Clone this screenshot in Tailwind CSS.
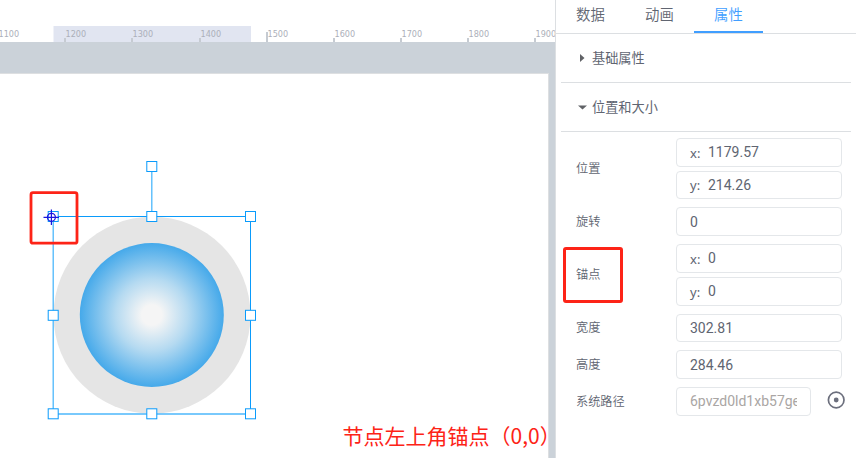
<!DOCTYPE html>
<html lang="zh">
<head>
<meta charset="utf-8">
<title>属性</title>
<script src="https://cdn.jsdelivr.net/npm/@tailwindcss/browser@4"></script>
</head>
<body class="w-[858px] h-[458px] overflow-hidden flex bg-white font-['Noto_Sans_CJK_SC',sans-serif] font-[350] text-[#606571]">
<main class="relative w-[555px] h-full shrink-0 overflow-hidden flex flex-col">
  <div class="h-[42px] shrink-0">
    <svg class="block" width="555" height="42" font-family="'DejaVu Sans Condensed','DejaVu Sans',sans-serif" font-stretch="condensed" font-weight="400" font-size="9" fill="#acb0ba">
      <rect x="53.500" y="26" width="197.500" height="16" fill="#e1e5f1"/>
      <g fill="#c6cbd2">
        <rect x="64" y="38" width="2" height="4"/><rect x="131" y="38" width="2" height="4"/><rect x="199" y="38" width="2" height="4"/><rect x="266" y="32" width="2" height="10"/><rect x="333" y="38" width="2" height="4"/><rect x="400" y="38" width="2" height="4"/><rect x="467" y="38" width="2" height="4"/><rect x="534" y="38" width="2" height="4"/>
      </g>
      <text x="-1.500" y="37">1100</text><text x="65.500" y="37">1200</text><text x="132.500" y="37">1300</text><text x="200.500" y="37">1400</text><text x="267.500" y="37">1500</text><text x="334.500" y="37">1600</text><text x="401.500" y="37">1700</text><text x="468.500" y="37">1800</text><text x="535.500" y="37">1900</text>
    </svg>
  </div>
  <div class="flex-1 bg-[#cbd2d9] pt-[31px] pr-[6px]">
    <div class="h-full bg-white border-t border-r border-[#dddfe1]"></div>
  </div>
  <svg class="absolute left-0 top-0" width="555" height="458" fill="none">
    <defs>
      <radialGradient id="ball"><stop offset="0" stop-color="#f5f5f5"/><stop offset=".14" stop-color="#f5f5f5"/><stop offset=".5" stop-color="#b5daf1"/><stop offset="1" stop-color="#45a9ea"/></radialGradient>
    </defs>
    <circle cx="152" cy="315.200" r="98.500" fill="#e5e5e5"/>
    <circle cx="151.800" cy="315" r="72" fill="url(#ball)"/>
    <g stroke="#0a9bfb">
      <path d="M53 216.500H251M250.500 216V414"/>
      <path d="M53.200 216V414M53 414H251M151.800 171V212" stroke-width="1.300" stroke="#4db8fc"/>
      <g fill="#fff">
        <rect x="48.200" y="211.500" width="10" height="10"/><rect x="146.800" y="211.500" width="10" height="10"/><rect x="245.500" y="211.500" width="10" height="10"/>
        <rect x="48.200" y="310.300" width="10" height="10"/><rect x="245.500" y="310.300" width="10" height="10"/>
        <rect x="48.200" y="408.800" width="10" height="10"/><rect x="146.800" y="408.800" width="10" height="10"/><rect x="245.500" y="408.800" width="10" height="10"/>
        <rect x="146.800" y="161.500" width="10" height="10"/>
      </g>
    </g>
    <g stroke="#1b16dc" stroke-width="1.200"><circle cx="51.400" cy="217.300" r="4"/><path d="M43.500 217.400H59M51.400 209.500V225"/></g>
    <rect x="31" y="192.700" width="46" height="50.500" rx="2" stroke="#fd2317" stroke-width="2.800"/>
  </svg>
  <p class="absolute left-[342.500px] top-[419px] text-[21px] leading-8 whitespace-nowrap font-normal text-[#fd2317]">节点左上角锚点（0,0）</p>
</main>
<aside class="w-[303px] h-full shrink-0 border-l border-[#dcdfe2] pr-[2px]">
  <nav class="h-[34px] flex border-b border-[#dcdfe2] text-[14.400px] leading-[28px]">
    <a class="w-[69px] pl-5">数据</a>
    <a class="w-[69px] pl-5">动画</a>
    <a class="w-[69px] h-[33px] pl-5 text-[#409eff] border-b-2 border-[#409eff]">属性</a>
  </nav>
  <section class="ml-[5px] mr-[5px]">
    <h2 class="h-[49px] border-b border-[#dcdfe2] flex items-center text-[13.200px] font-normal">
      <svg class="ml-[15px] mr-[4px]" width="12" height="12"><path d="M4 2L8.500 6L4 10Z" fill="#606266"/></svg>基础属性
    </h2>
    <h2 class="h-[49px] border-b border-[#dcdfe2] flex items-center text-[13.200px] font-normal">
      <svg class="ml-[15px] mr-[4px]" width="12" height="12"><path d="M2 4.500H11L6.500 8.500Z" fill="#606266"/></svg>位置和大小
    </h2>
  </section>
  <section class="pl-5 pt-[6px] flex flex-col gap-[8px] text-[12.200px]">
    <div class="h-[61px] flex items-center">
      <span class="w-[100px] pb-[1px]">位置</span>
      <div class="w-[166px] h-full flex flex-col justify-between text-[14px] font-normal font-[Roboto,sans-serif]">
        <div class="h-[29px] border border-[#e4e7ea] rounded-[4px] pl-[13px] flex items-center"><span class="w-[18px] text-[13px] pt-[2px] font-['Noto_Sans',sans-serif]">x:</span>1179.57</div>
        <div class="h-[28px] border border-[#e4e7ea] rounded-[4px] pl-[13px] flex items-center"><span class="w-[18px] text-[13px] pt-[2px] font-['Noto_Sans',sans-serif]">y:</span>214.26</div>
      </div>
    </div>
    <div class="h-[29px] flex items-center">
      <span class="w-[100px] pb-[1px]">旋转</span>
      <div class="w-[166px] h-full border border-[#e4e7ea] rounded-[4px] pl-[13px] pt-px flex items-center text-[14px] font-normal font-[Roboto,sans-serif]">0</div>
    </div>
    <div class="h-[62px] flex items-center">
      <div class="w-[100px] h-full relative flex items-center pb-[2px]">锚点<div class="absolute left-[-13px] top-[3px] w-[60px] h-[56px] border-[3px] border-[#fd2317] rounded-[3px]"></div></div>
      <div class="w-[166px] h-full flex flex-col justify-between text-[14px] font-normal font-[Roboto,sans-serif]">
        <div class="h-[29px] border border-[#e4e7ea] rounded-[4px] pl-[13px] flex items-center"><span class="w-[18px] text-[13px] pt-[2px] font-['Noto_Sans',sans-serif]">x:</span>0</div>
        <div class="h-[29px] border border-[#e4e7ea] rounded-[4px] pl-[13px] flex items-center"><span class="w-[18px] text-[13px] pt-[2px] font-['Noto_Sans',sans-serif]">y:</span>0</div>
      </div>
    </div>
    <div class="h-[28px] flex items-center">
      <span class="w-[100px] pb-[2px]">宽度</span>
      <div class="w-[166px] h-full border border-[#e4e7ea] rounded-[4px] pl-[13px] pt-px flex items-center text-[14px] font-normal font-[Roboto,sans-serif]">302.81</div>
    </div>
    <div class="h-[29px] flex items-center">
      <span class="w-[100px] pb-[1px]">高度</span>
      <div class="w-[166px] h-full border border-[#e4e7ea] rounded-[4px] pl-[13px] pt-px flex items-center text-[14px] font-normal font-[Roboto,sans-serif]">284.46</div>
    </div>
    <div class="h-[29px] flex items-center">
      <span class="w-[100px] pb-[1px]">系统路径</span>
      <div class="w-[135px] h-full border border-[#e4e7ea] rounded-[4px] px-[13px] flex items-center text-[14px] font-normal font-[Roboto,sans-serif] text-[#aaa6a4]"><span class="w-[107px] overflow-hidden whitespace-nowrap">6pvzd0ld1xb57ge</span></div>
      <svg class="ml-[16px] mb-[3px]" width="18" height="18" fill="none" stroke="#6c6f7d" stroke-width="1.700"><circle cx="9.200" cy="9" r="7.800"/><circle cx="9.200" cy="9" r="2.400" fill="#6c6f7d" stroke="none"/></svg>
    </div>
  </section>
</aside>
</body>
</html>
